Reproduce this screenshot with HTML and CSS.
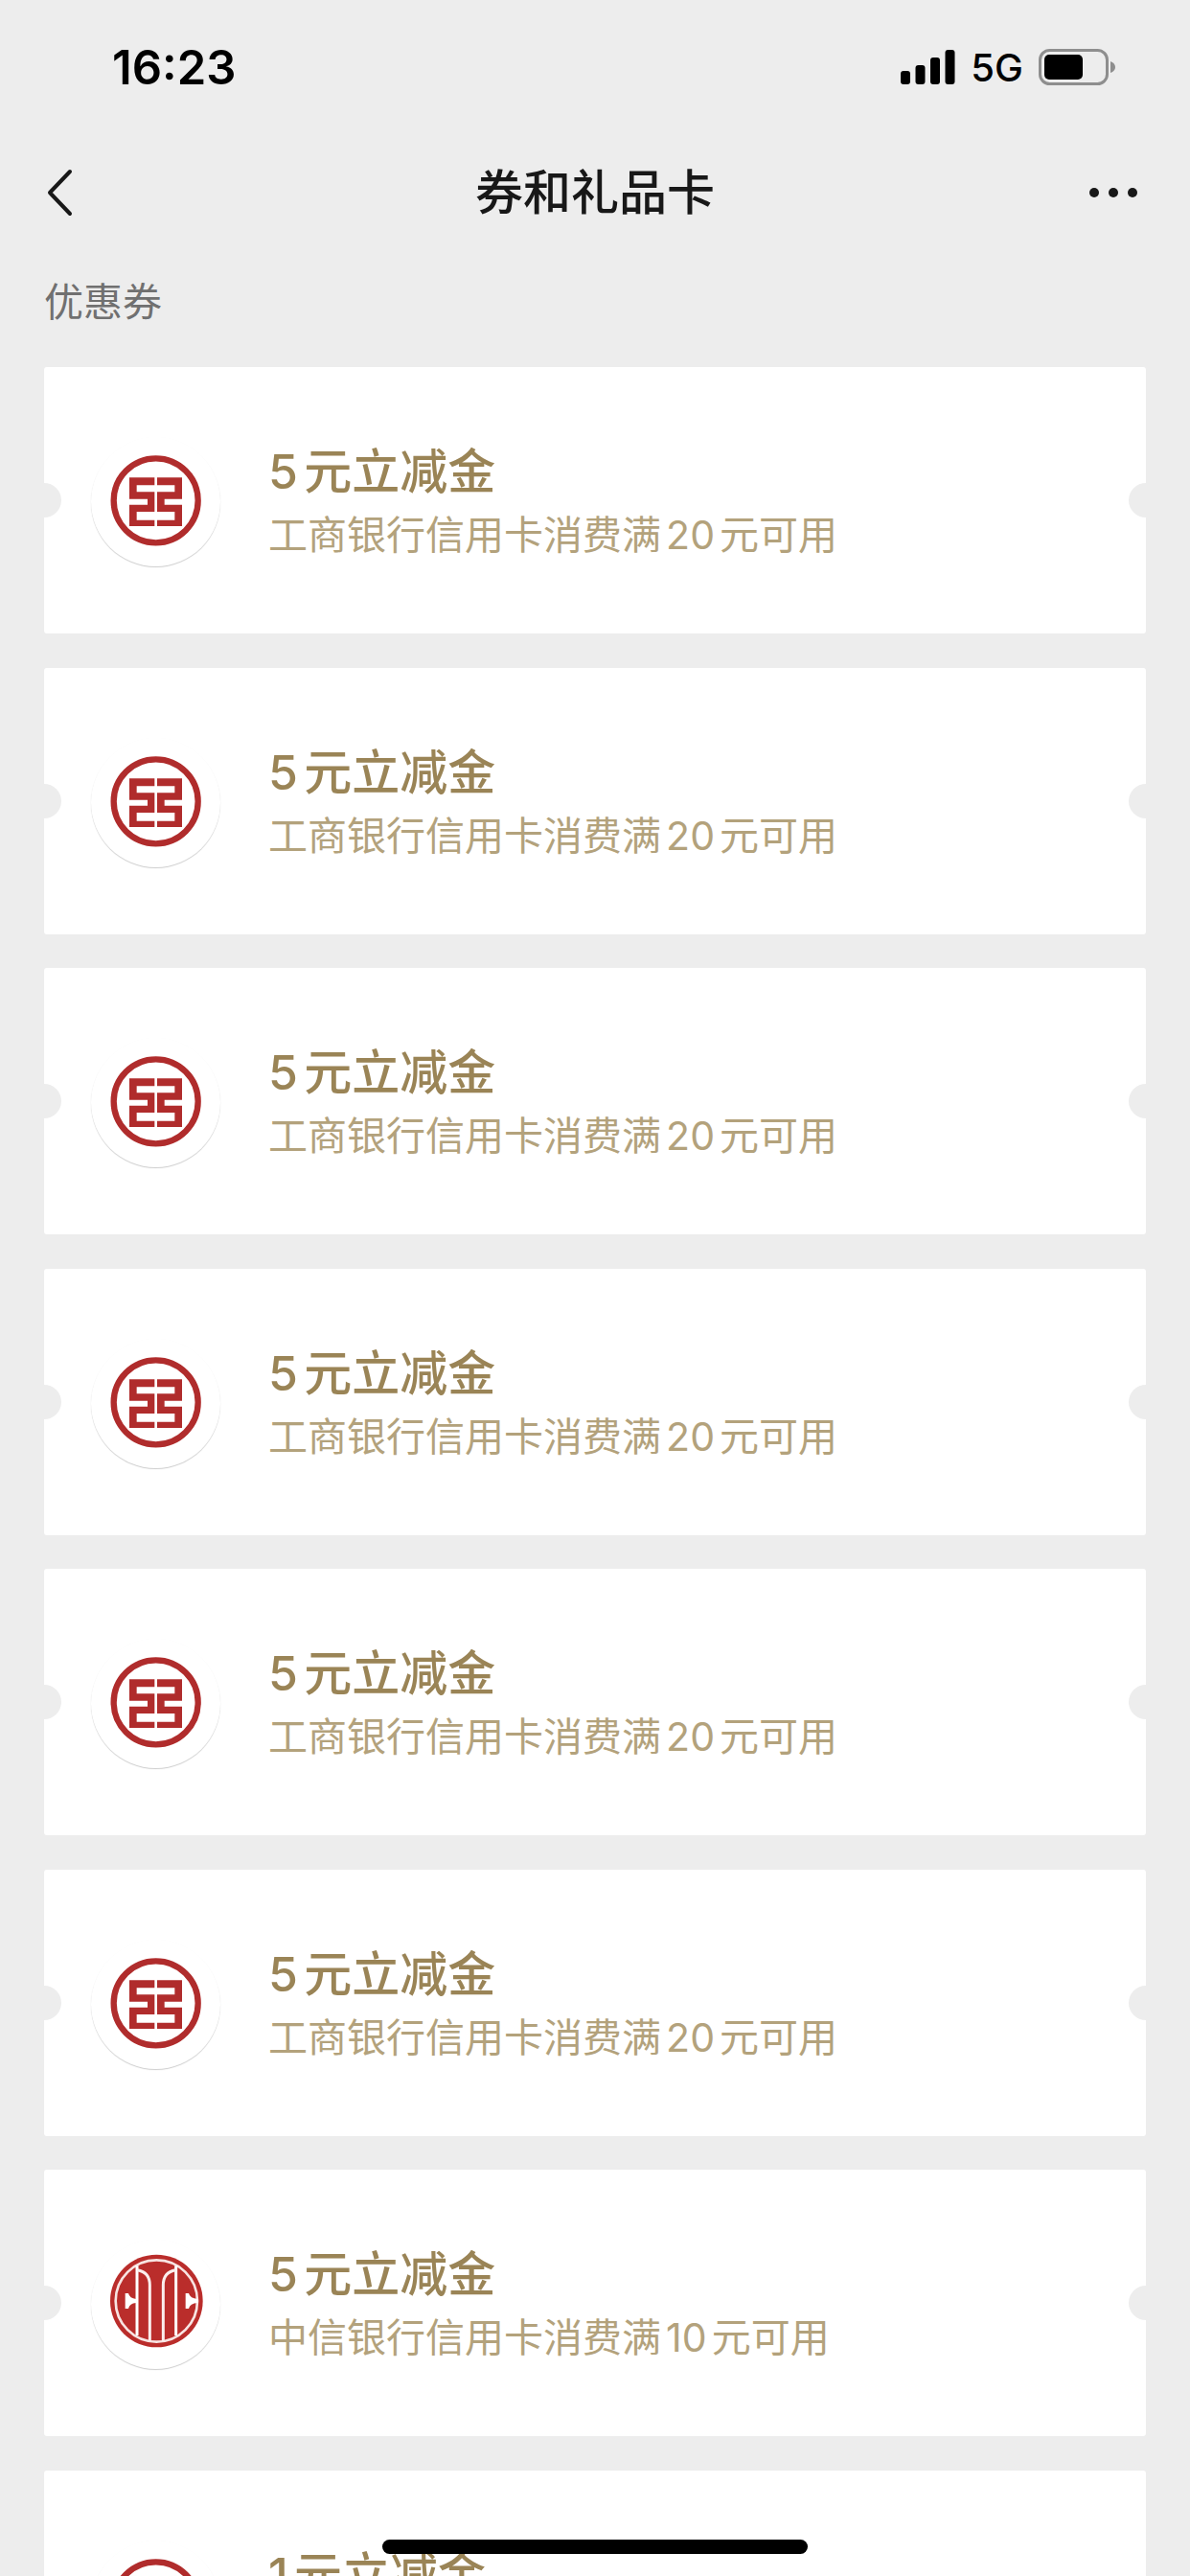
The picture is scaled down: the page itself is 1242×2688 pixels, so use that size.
FILE: index.html
```html
<!DOCTYPE html>
<html lang="zh-CN">
<head>
    <meta charset="UTF-8">
    <meta name="viewport" content="width=device-width, initial-scale=1.0">
    <title>券和礼品卡</title>
    <link rel="stylesheet" href="styles.css">
</head>
<body>
    <!-- Bank logos, reused by the coupons below -->
    <svg class="sprite" aria-hidden="true">
        <symbol id="logo-icbc" viewBox="15 48 405 405">
            <circle cx="218" cy="247" r="132" fill="none" stroke="#b02c2c" stroke-width="19"/>
            <path fill="#b02c2c" d="M135 175H214V199H158V220H214V282H158V308H214V327H135V260H192V242H135Z"/>
            <path fill="#b02c2c" d="M222 175H300V242H245V260H300V327H222V308H277V282H222V220H277V199H222Z"/>
        </symbol>
        <symbol id="logo-citic" viewBox="15 56 405 405">
            <circle cx="220" cy="248" r="145" fill="#ba2d2b"/>
            <circle cx="220" cy="248" r="128" fill="none" stroke="#f8e4e2" stroke-width="8"/>
            <g fill="none" stroke="#fff" stroke-width="9">
                <path d="M159 138V356"/>
                <path d="M281 138V356"/>
                <path d="M160 151Q199 158 199 198V373" stroke="#fbeeed"/>
                <path d="M280 151Q241 158 241 198V373" stroke="#fbeeed"/>
            </g>
            <path fill="#fff" d="M122 224H132Q136 240 156 242V254Q136 256 132 272H122Z"/>
            <path fill="#fff" d="M311 224H321Q325 240 349 242V254Q325 256 321 272H311Z"/>
        </symbol>
    </svg>

    <div class="status-bar">
        <span class="time">16:23</span>
        <div class="status-icons">
            <svg class="signal" width="57" height="38" viewBox="0 0 57 38" aria-hidden="true">
                <rect x="0" y="23" width="10" height="14" rx="3"/>
                <rect x="15.5" y="17" width="10" height="20" rx="3"/>
                <rect x="31" y="9" width="10" height="28" rx="3"/>
                <rect x="46.5" y="1" width="10" height="36" rx="3"/>
            </svg>
            <span class="network">5G</span>
            <svg class="battery" width="80" height="38" viewBox="0 0 80 38" aria-hidden="true">
                <rect x="1.5" y="1.5" width="70" height="35" rx="10" fill="none" stroke="#8e8e8e" stroke-width="3"/>
                <rect x="6" y="6" width="40" height="26" rx="5"/>
                <path d="M75 13Q80 15 80 19T75 25Z" fill="#8e8e8e"/>
            </svg>
        </div>
    </div>

    <header class="nav-bar">
        <button class="nav-btn back-btn" type="button" aria-label="返回">
            <svg width="30" height="52" viewBox="0 0 30 52" aria-hidden="true">
                <path d="M27 4L6 26L27 48" fill="none" stroke="#181818" stroke-width="4" stroke-linecap="round" stroke-linejoin="round"/>
            </svg>
        </button>
        <h1>券和礼品卡</h1>
        <button class="nav-btn more-btn" type="button" aria-label="更多">
            <svg width="52" height="12" viewBox="0 0 52 12" aria-hidden="true">
                <circle cx="6" cy="6" r="5" fill="#181818"/>
                <circle cx="26" cy="6" r="5" fill="#181818"/>
                <circle cx="46" cy="6" r="5" fill="#181818"/>
            </svg>
        </button>
    </header>

    <main>
        <h2 class="section-title">优惠券</h2>
        <div class="coupon-list">
            <div class="coupon">
                <svg class="coupon-logo"><use href="#logo-icbc"/></svg>
                <div class="coupon-text">
                    <h3>5元立减金</h3>
                    <p>工商银行信用卡消费满20元可用</p>
                </div>
            </div>
            <div class="coupon">
                <svg class="coupon-logo"><use href="#logo-icbc"/></svg>
                <div class="coupon-text">
                    <h3>5元立减金</h3>
                    <p>工商银行信用卡消费满20元可用</p>
                </div>
            </div>
            <div class="coupon">
                <svg class="coupon-logo"><use href="#logo-icbc"/></svg>
                <div class="coupon-text">
                    <h3>5元立减金</h3>
                    <p>工商银行信用卡消费满20元可用</p>
                </div>
            </div>
            <div class="coupon">
                <svg class="coupon-logo"><use href="#logo-icbc"/></svg>
                <div class="coupon-text">
                    <h3>5元立减金</h3>
                    <p>工商银行信用卡消费满20元可用</p>
                </div>
            </div>
            <div class="coupon">
                <svg class="coupon-logo"><use href="#logo-icbc"/></svg>
                <div class="coupon-text">
                    <h3>5元立减金</h3>
                    <p>工商银行信用卡消费满20元可用</p>
                </div>
            </div>
            <div class="coupon">
                <svg class="coupon-logo"><use href="#logo-icbc"/></svg>
                <div class="coupon-text">
                    <h3>5元立减金</h3>
                    <p>工商银行信用卡消费满20元可用</p>
                </div>
            </div>
            <div class="coupon">
                <svg class="coupon-logo"><use href="#logo-citic"/></svg>
                <div class="coupon-text">
                    <h3>5元立减金</h3>
                    <p>中信银行信用卡消费满10元可用</p>
                </div>
            </div>
            <div class="coupon">
                <svg class="coupon-logo"><use href="#logo-icbc"/></svg>
                <div class="coupon-text">
                    <h3>1元立减金</h3>
                </div>
            </div>
        </div>
    </main>

    <div class="home-indicator"></div>
</body>
</html>
```

FILE: styles.css
```css
* {
    box-sizing: border-box;
}

body {
    font-family: Inter, "Noto Sans CJK SC", sans-serif;
    margin: 0;
    height: 100vh;
    overflow: hidden;
    background-color: #ededed;
    color: #181818;
    text-autospace: normal;
}

h1, h2, h3, p {
    margin: 0;
}

.sprite {
    display: none;
}

.status-bar {
    display: flex;
    justify-content: space-between;
    align-items: center;
    height: 140px;
    padding: 0 78px 0 117px;
    color: #000;
}

.time {
    font-size: 49px;
    font-weight: 600;
}

.status-icons {
    display: flex;
    align-items: center;
    gap: 16px;
}

.network {
    font-size: 40px;
    font-weight: 500;
}

.nav-bar {
    display: grid;
    grid-template-columns: 1fr auto 1fr;
    align-items: center;
    height: 122px;
    padding: 0 46px;
}

.nav-bar h1 {
    font-size: 50px;
    font-weight: 500;
    line-height: 72px;
}

.nav-btn {
    display: flex;
    align-items: center;
    padding: 0;
    border: none;
    background: none;
    cursor: pointer;
}

.back-btn {
    justify-self: start;
}

.more-btn {
    justify-self: end;
    padding: 0 8px;
}

.section-title {
    padding: 23px 46px 38px;
    font-size: 41px;
    font-weight: 400;
    line-height: 60px;
    color: #707070;
}

.coupon-list {
    display: flex;
    flex-direction: column;
    gap: 2.86vw;
    padding: 0 46px;
}

.coupon {
    display: flex;
    position: relative;
    gap: 50px;
    padding: 73px 49px 70px;
    border-radius: 3px;
    background-color: #fff;
    overflow: hidden;
}

/* ticket notches */
.coupon::before,
.coupon::after {
    content: "";
    position: absolute;
    top: 50%;
    width: 36px;
    height: 36px;
    margin-top: -18px;
    border-radius: 50%;
    background-color: #ededed;
}

.coupon::before {
    left: -18px;
}

.coupon::after {
    right: -18px;
}

.coupon-logo {
    flex-shrink: 0;
    width: 135px;
    height: 135px;
    border-radius: 50%;
    box-shadow: 0 1px 1px rgba(0,0,0,0.2);
}

.coupon-text h3 {
    font-size: 50px;
    font-weight: 500;
    line-height: 72px;
    color: #9a8456;
}

.coupon-text p {
    font-size: 41px;
    line-height: 60px;
    color: #b3a27c;
}

.home-indicator {
    position: fixed;
    bottom: 23px;
    left: 50%;
    width: 444px;
    height: 15px;
    margin-left: -222px;
    border-radius: 8px;
    background-color: #000;
}
```
